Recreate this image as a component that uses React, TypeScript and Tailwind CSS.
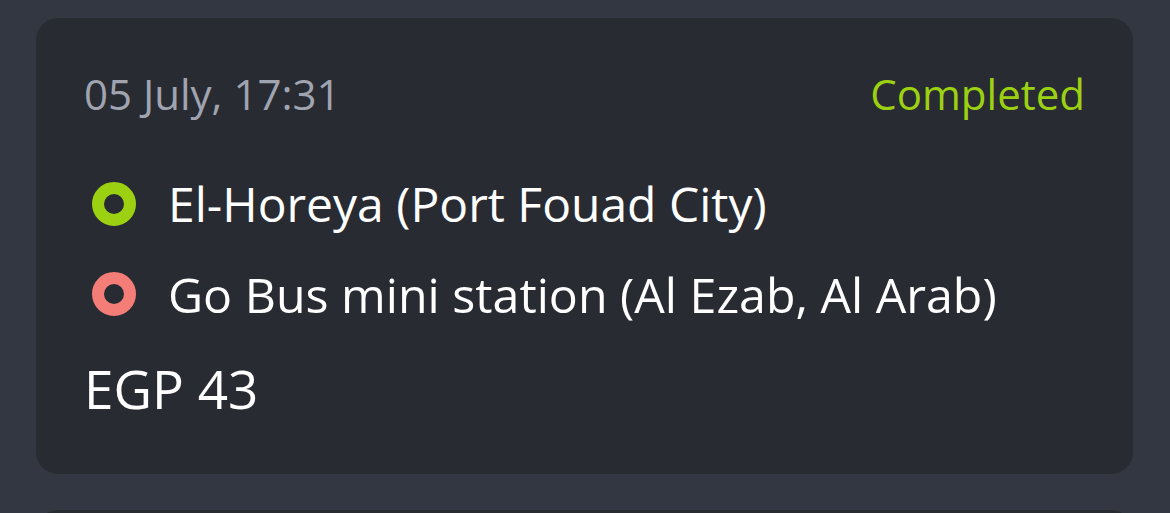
import React from "react";

function Ring({ color }: { color: string }) {
  return (
    <span
      className={`box-border block h-[44px] w-[44px] shrink-0 rounded-full border-[12px] ${color}`}
    />
  );
}

export default function App() {
  return (
    <div
      className="h-[513px] w-[1170px] overflow-hidden bg-[#323741] pt-[18px] pl-[36px] pr-[37px]"
      style={{ fontFamily: '"Open Sans", "Noto Sans", sans-serif' }}
    >
      <div className="flex flex-col rounded-[22px] bg-[#282b32] pl-[48px] pr-[48px] pt-[48px] pb-[55px]">
        <div className="flex items-center justify-between text-[42px] leading-[56px]">
          <span className="text-[#a0a4b0]">05 July, 17:31</span>
          <span className="text-[#9cd112]">Completed</span>
        </div>
        <div className="mt-[52px] flex flex-col gap-[30px] pl-[8px]">
          <div className="flex h-[60px] items-center gap-[32px]">
            <Ring color="border-[#9cd112]" />
            <span className="text-[48px] leading-[60px] text-white">
              El-Horeya (Port Fouad City)
            </span>
          </div>
          <div className="flex h-[60px] items-center gap-[32px]">
            <Ring color="border-[#f47d77]" />
            <span className="text-[48.3px] leading-[60px] text-white">
              Go Bus mini station (Al Ezab, Al Arab)
            </span>
          </div>
        </div>
        <div className="mt-[35px] text-[53px] leading-[60px] text-white">EGP 43</div>
      </div>
      <div className="mt-[36px] h-[100px] rounded-[22px] bg-[#282b32]" />
    </div>
  );
}
